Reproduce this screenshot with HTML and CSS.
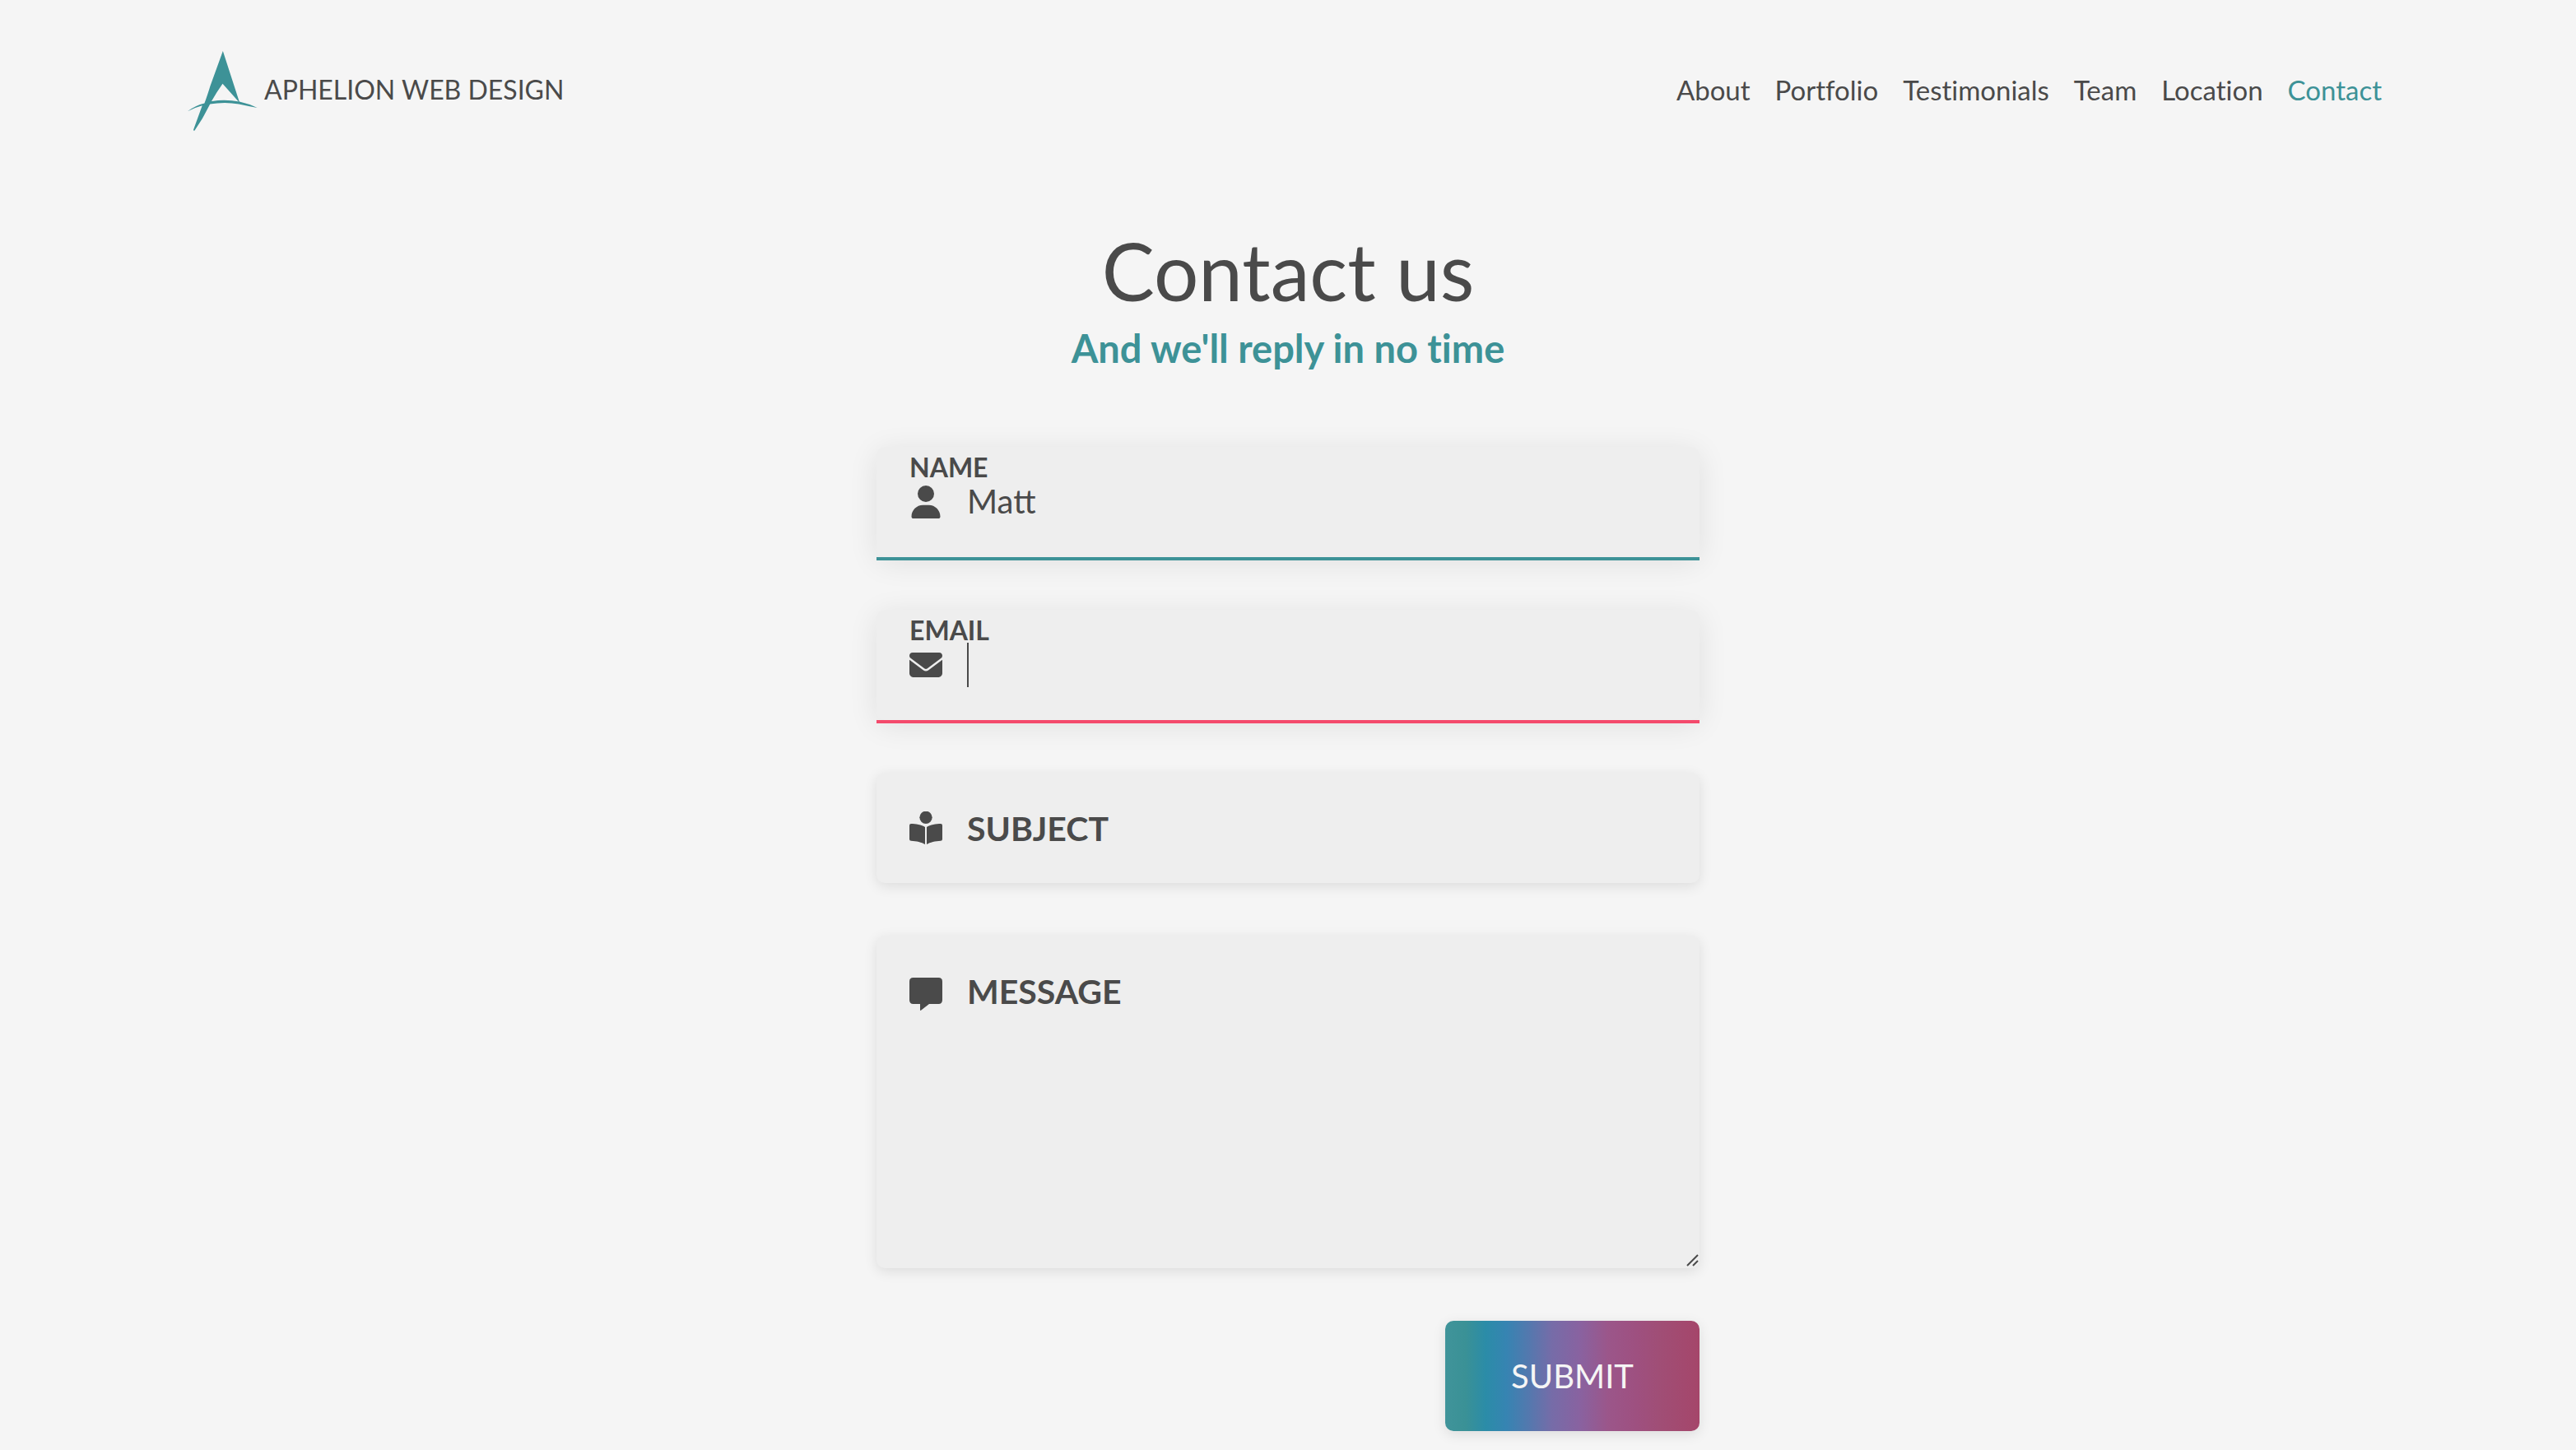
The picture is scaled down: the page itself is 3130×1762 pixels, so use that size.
FILE: index.html
```
<!DOCTYPE html>
<html lang="en">
<head>
  <meta charset="utf-8">
  <meta name="viewport" content="width=device-width, initial-scale=1">
  <title>Contact us | Aphelion Web Design</title>
  <link rel="stylesheet" href="styles.css">
</head>
<body>
  <header class="site-header">
    <a class="brand" href="#">
      <svg class="brand-logo" viewBox="24 36 254 290" aria-hidden="true">
        <path d="M152 36L213 224L151 155Q129 186 112 216Q90 258 77 282L49 325Q43 327 46 319L77 234Q50 241 24 255Q52 234 85 226Q98 190 106 163Z"/>
        <path d="M84 228Q95 220 112 218Q163 211 212 220Q248 228 277 242Q245 237 210 229Q160 220 104 229Q90 232 77 236Z"/>
      </svg>
      <span>APHELION WEB DESIGN</span>
    </a>
    <nav class="site-nav">
      <a href="#about">About</a>
      <a href="#portfolio">Portfolio</a>
      <a href="#testimonials">Testimonials</a>
      <a href="#team">Team</a>
      <a href="#location">Location</a>
      <a class="active" href="#contact">Contact</a>
    </nav>
  </header>

  <main class="contact" id="contact">
    <h1 class="title">Contact us</h1>
    <p class="subtitle">And we'll reply in no time</p>

    <form class="form">
      <div class="field raised valid">
        <label class="label floating" for="name">NAME</label>
        <svg class="icon" viewBox="0 0 512 512" aria-hidden="true"><path transform="translate(32 0)" d="M224 256A128 128 0 1 0 224 0a128 128 0 1 0 0 256zm-45.700 48C79.800 304 0 383.800 0 482.300C0 498.700 13.300 512 29.700 512H418.300c16.400 0 29.700-13.300 29.700-29.700C448 383.800 368.200 304 269.700 304H178.300z"/></svg>
        <input class="control" id="name" type="text" value="Matt">
      </div>

      <div class="field raised invalid">
        <label class="label floating" for="email">EMAIL</label>
        <svg class="icon" viewBox="0 0 512 512" aria-hidden="true"><path d="M48 64C21.500 64 0 85.500 0 112c0 15.100 7.100 29.300 19.200 38.400L236.800 313.600c11.400 8.500 27 8.500 38.400 0L492.800 150.400c12.100-9.100 19.200-23.300 19.200-38.400c0-26.500-21.500-48-48-48H48zM0 176V384c0 35.300 28.700 64 64 64H448c35.300 0 64-28.700 64-64V176L294.400 339.200c-22.800 17.100-54 17.100-76.800 0L0 176z"/></svg>
        <input class="control" id="email" type="email">
        <span class="caret" aria-hidden="true"></span>
      </div>

      <div class="field">
        <label class="label" for="subject">SUBJECT</label>
        <svg class="icon" viewBox="0 0 120 120" aria-hidden="true"><circle cx="60" cy="22" r="23"/><path d="M57 57C45 49 22 45 6 45Q0 45 0 51V101Q0 107 6 107C25 108 45 112 57 120ZM63 57C75 49 98 45 114 45Q120 45 120 51V101Q120 107 114 107C95 108 75 112 63 120Z"/></svg>
        <input class="control" id="subject" type="text">
      </div>

      <div class="field message">
        <label class="label" for="message">MESSAGE</label>
        <svg class="icon" viewBox="0 0 120 120" aria-hidden="true"><path d="M14 0H106Q120 0 120 14V82Q120 96 106 96H72L42 119Q39 121 39 117V96H14Q0 96 0 82V14Q0 0 14 0Z"/></svg>
        <textarea class="control" id="message" rows="6"></textarea>
        <svg class="grip" viewBox="0 0 16 16" aria-hidden="true"><path d="M1 14L14 1M8 14L14 8"/></svg>
      </div>

      <button class="submit" type="submit">SUBMIT</button>
    </form>
  </main>
</body>
</html>
```
FILE: styles.css
```
:root {
  --bg: #f5f5f5;
  --surface: #eeeeee;
  --text: #4a4a4a;
  --accent: #3d9297;
  --danger: #f44a6c;
}

* {
  box-sizing: border-box;
}

body {
  margin: 0;
  background: var(--bg);
  color: var(--text);
  font-family: Lato, "Noto Sans", sans-serif;
  font-size: 32px;
  font-variant-ligatures: none;
}

a {
  color: inherit;
  text-decoration: none;
}

.site-header {
  display: flex;
  align-items: center;
  justify-content: space-between;
  padding: 62px 236px 0 228px;
}

.brand {
  display: flex;
  align-items: center;
  gap: 8px;
}

.brand-logo {
  width: 85px;
  height: 97px;
  fill: var(--accent);
}

.brand span,
.site-nav a {
  padding-bottom: 4px;
}

.site-nav {
  display: flex;
  gap: 30px;
  font-size: 33px;
}

.site-nav .active {
  color: var(--accent);
}

.contact {
  width: 1000px;
  max-width: 100%;
  margin: 0 auto;
  padding: 110px 0 23px;
  text-align: center;
}

.title {
  margin: 0;
  font-size: 96px;
  font-weight: 400;
  line-height: 120px;
}

.subtitle {
  margin: 2px 0 88px;
  color: var(--accent);
  font-size: 47px;
  font-weight: 700;
  line-height: 64px;
}

.form {
  display: flex;
  flex-direction: column;
  gap: 64px;
}

.field {
  position: relative;
  border-radius: 10px;
  background: var(--surface);
  box-shadow: 0 4px 16px rgba(0, 0, 0, 0.1);
}

.raised {
  box-shadow: 0 6px 36px rgba(0, 0, 0, 0.09);
}

.raised::after {
  content: "";
  position: absolute;
  top: 100%;
  left: 0;
  right: 0;
  height: 4px;
  background: var(--accent);
}

.invalid::after {
  background: var(--danger);
}

.label {
  position: absolute;
  top: 41px;
  left: 110px;
  font-size: 41px;
  font-weight: 700;
  line-height: 54px;
}

.floating {
  top: 5px;
  left: 40px;
  font-size: 32px;
  line-height: 40px;
}

.icon {
  position: absolute;
  top: 47px;
  left: 40px;
  width: 40px;
  height: 40px;
  fill: var(--text);
}

.message .icon {
  top: 51px;
}

.control {
  display: block;
  width: 100%;
  margin: 0;
  padding: 39px 40px 41px 110px;
  border: 0;
  outline: 0;
  background: transparent;
  color: var(--text);
  font-family: inherit;
  font-size: 40px;
  font-weight: 400;
  line-height: 54px;
  resize: none;
}

input.control {
  height: 134px;
}

.caret {
  position: absolute;
  top: 40px;
  left: 110px;
  width: 2px;
  height: 54px;
  background: var(--text);
}

.grip {
  position: absolute;
  right: 0;
  bottom: 1px;
  width: 16px;
  height: 16px;
  fill: none;
  stroke: var(--text);
  stroke-width: 2;
}

.submit {
  align-self: flex-end;
  padding: 40px 80px;
  border: 0;
  border-radius: 10px;
  background: linear-gradient(90deg, #40949a 0%, #3a9196 8%, #2b8ca8 16%, #3684b2 24%, #5478ae 33%, #766ca8 42%, #8962a0 53%, #9b568a 64%, #9e5080 75%, #a04e76 84%, #a5466a 100%);
  box-shadow: 0 4px 16px rgba(0, 0, 0, 0.1);
  color: var(--bg);
  font-family: inherit;
  font-size: 40px;
  font-weight: 400;
  line-height: 54px;
}
```
